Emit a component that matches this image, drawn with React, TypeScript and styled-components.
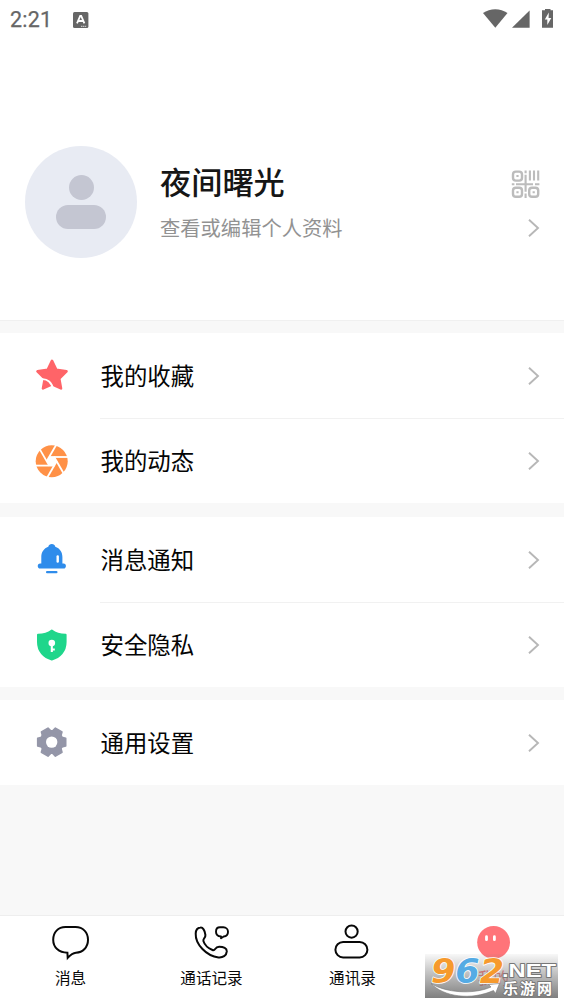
import React from 'react';
import styled, { createGlobalStyle } from 'styled-components';

const GlobalStyle = createGlobalStyle`
  * { box-sizing: border-box; }
  html, body { margin: 0; padding: 0; background: #f8f8f8; }
  body { font-family: Roboto, "Noto Sans CJK SC", sans-serif; color: #0c0c0c; }
  svg { display: block; flex: none; }
`;

const Screen = styled.div`
  width: 564px;
  height: 1004px;
  display: flex;
  flex-direction: column;
  background: #f8f8f8;
  overflow: hidden;
`;

const Header = styled.header`
  height: 321px;
  flex: none;
  background: #fff;
  border-bottom: 1px solid #f0f0f0;
`;

const StatusBar = styled.div`
  height: 40px;
  display: flex;
  align-items: center;
  padding: 0 10px 0 10px;
  color: #666;
`;

const Clock = styled.span`
  font: 400 21.5px/40px Roboto, sans-serif;
  width: 63px;
  height: 40px;
  letter-spacing: 0.2px;
  -webkit-text-stroke: 0.25px #666;
`;

const StatusIcons = styled.div`
  margin-left: auto;
`;

const Profile = styled.div`
  display: flex;
  margin-top: 106px;
  padding: 0 24px 0 25px;
`;

const Avatar = styled.div`
  width: 112px;
  height: 112px;
  border-radius: 50%;
  background: #e8ebf3;
  display: flex;
  flex-direction: column;
  align-items: center;
  padding-top: 29px;
  gap: 5px;
`;

const AvatarHead = styled.div`
  width: 25px;
  height: 25px;
  border-radius: 50%;
  background: #c4c6d2;
`;

const AvatarBody = styled.div`
  width: 50px;
  height: 24px;
  border-radius: 12px;
  background: #c4c6d2;
`;

const ProfileText = styled.div`
  margin-left: 23px;
  padding-top: 15px;
`;

const Name = styled.div`
  font-size: 31.2px;
  line-height: 46px;
  font-weight: 500;
  color: #161616;
`;

const Hint = styled.div`
  font-size: 20.3px;
  line-height: 30px;
  margin-top: 7px;
  color: #929292;
`;

const ProfileActions = styled.div`
  margin-left: auto;
  padding-top: 24px;
  display: flex;
  flex-direction: column;
  align-items: flex-end;
  gap: 19px;
`;

const Group = styled.section<{ $gap: number }>`
  margin-top: ${(p) => p.$gap}px;
  flex: none;
  background: #fff;
`;

const Row = styled.div<{ $height: number }>`
  height: ${(p) => p.$height}px;
  display: flex;
  padding-left: 34px;
`;

const RowIcon = styled.div`
  width: 66px;
  display: flex;
  align-items: center;
  padding-bottom: 1px;
`;

const RowMain = styled.div<{ $line?: boolean }>`
  flex: 1;
  display: flex;
  align-items: center;
  justify-content: space-between;
  padding-right: 24px;
  border-bottom: ${(p) => (p.$line ? '1px solid #f1f1f1' : '0')};
`;

const RowLabel = styled.span`
  font-size: 23.4px;
  line-height: 36px;
  padding: 2px 0 0 0.5px;
  color: #050505;
`;

const TabBar = styled.nav`
  position: relative;
  margin-top: auto;
  height: 89px;
  flex: none;
  display: flex;
  background: #fff;
  border-top: 1px solid #eee;
`;

const Tab = styled.div<{ $active?: boolean }>`
  flex: 1;
  display: flex;
  flex-direction: column;
  align-items: center;
  padding-top: 7px;
  font-size: 15.6px;
  line-height: 24px;
  color: ${(p) => (p.$active ? '#ff7479' : '#080808')};
`;

const TabLabel = styled.span`
  margin-top: 6px;
`;

const Watermark = styled.div`
  position: absolute;
  left: 425px;
  top: 36px;
  width: 133px;
  height: 46px;
`;

const Chevron = () => (
  <svg width="15" height="20" viewBox="0 0 15 20">
    <path d="M4 1.8 13 10 4 18.2" fill="none" stroke="#b7b7b7" strokeWidth="1.9" />
  </svg>
);

const QrIcon = () => (
  <svg width="29" height="29" viewBox="0 0 29 29" fill="none" stroke="#bcbcbc" strokeWidth="2.4">
    <rect x="2" y="1.6" width="9" height="9" rx="2.8" />
    <rect x="2" y="17.8" width="9" height="9" rx="2.8" />
    <rect x="18.2" y="17.8" width="9" height="9" rx="2.8" />
    <path d="M14.6 .6v2.6M14.6 4.8v17M14.6 23.4v4.6M18.9 .6v10M23 .6v10M27.2 .6v10M.8 14.2h2.6M5 14.2h17M24 14.2h4.4" strokeWidth="2.1" />
    <path d="M5.4 6.1h2.2M5.4 22.3h2.2M21.6 22.3h2.2" strokeWidth="2" />
  </svg>
);

const StarIcon = () => (
  <svg width="36" height="36" viewBox="0 0 36 36">
    <path
      d="M18 2.9 22.3 11.7 32.5 13.3 25.2 20.5 27 30.4 18 26.2 9 30.4 10.8 20.5 3.5 13.3 13.7 11.7Z"
      fill="#ff6468" stroke="#ff6468" strokeWidth="2.6" strokeLinejoin="round"
    />
    <path d="M7 21.2C13.4 20.4 18.2 24.4 19 31.8" fill="none" stroke="#fff" strokeWidth="1.9" />
  </svg>
);

const ApertureIcon = () => (
  <svg width="36" height="36" viewBox="0 0 36 36">
    <circle cx="17.7" cy="18.3" r="16" fill="#ff9147" />
    <path d="m17.7 13 4.3 2.5v5L17.7 23l-4.3-2.5v-5Z" fill="#fff" transform="translate(0 .3) rotate(30 17.7 18)" />
    <g stroke="#fff" strokeWidth="1.8">
      {[0, 60, 120, 180, 240, 300].map((a) => (
        <path key={a} d="M14.9 14H34" transform={`rotate(${a} 17.7 18.3)`} />
      ))}
    </g>
  </svg>
);

const BellIcon = () => (
  <svg width="36" height="36" viewBox="0 0 36 36" fill="#2f8ceb">
    <path d="M17.8 2c1.8 0 3.1 1 3.5 2.7 4.6 1.6 7.1 5.4 7.1 10.3v6.5h1.2c3.1 0 3.1 5.1 0 5.1H6.1c-3.1 0-3.1-5.1 0-5.1h1.2V15c0-4.9 2.5-8.7 7-10.3C14.7 3 16 2 17.8 2Z" />
    <rect x="12" y="28.9" width="11.5" height="2.4" rx="1" />
    <path d="M23.7 14.5v5" stroke="#fff" strokeWidth="2.4" strokeLinecap="round" />
  </svg>
);

const ShieldIcon = () => (
  <svg width="36" height="36" viewBox="0 0 36 36">
    <path
      d="M17.8 3.6C21.5 6.5 26.3 7.7 31.6 7.7V15C31.6 24.2 25.8 30.3 17.8 32.5 9.8 30.3 4 24.2 4 15V7.7C9.3 7.7 14.1 6.5 17.8 3.6Z"
      fill="#1fd68b" stroke="#1fd68b" strokeWidth="2" strokeLinejoin="round"
    />
    <circle cx="17.8" cy="16.1" r="3.3" fill="#fff" />
    <path d="M17.8 18v7M17.8 22.5h3" stroke="#fff" strokeWidth="2.1" />
  </svg>
);

const GearIcon = () => (
  <svg width="36" height="36" viewBox="0 0 36 36">
    <g fill="#9496a8">
      <circle cx="17.7" cy="18.1" r="12" />
      {[30, 90, 150, 210, 270, 330].map((a) => (
        <path
          key={a}
          d="M12.6 9 13.9 4.1H21.5L22.8 9Z"
          stroke="#9496a8"
          strokeWidth="1.6"
          strokeLinejoin="round"
          transform={`rotate(${a} 17.7 18.1)`}
        />
      ))}
    </g>
    <circle cx="17.7" cy="18.1" r="5.7" fill="#fff" />
  </svg>
);

const StatusApp = () => (
  <svg width="16" height="16" viewBox="0 0 16 16">
    <rect width="15.4" height="16" rx="1.5" fill="#666" />
    <path d="m4 11.3 3.2-7.5h1L11.4 11.3M5.3 9h4.9" fill="none" stroke="#fff" strokeWidth="1.8" />
    <path d="M8 14.3h5.5" stroke="#ddd" strokeWidth="1" strokeDasharray="1.4 .5" />
  </svg>
);

const SystemIcons = () => (
  <svg width="72" height="22" viewBox="0 0 72 22" fill="#666">
    <path d="M1 4C8 -1.1 18.5 -1.1 25.5 4L13.3 18.7Z" />
    <path d="M47.6 1.4v17.4H30Z" />
    <path d="M63 0h5.5v1.2H71v17.5H60V1.2h3Z" />
    <path d="m66.8 3.6-4 7h2.5v5.5l4-7.2h-2.7Z" fill="#fff" />
  </svg>
);

const ChatIcon = () => (
  <svg width="40" height="38" viewBox="0 0 40 38" fill="none" stroke="#080808" strokeWidth="2" strokeLinejoin="miter">
    <path d="M14.5 4.1H24.5C32 4.1 37 9.3 37 16.8 37 24.4 31.8 29.5 24.9 29.7 21.8 30 18.6 32.8 16.7 34.8L16.4 29.7C7.8 29.7 2.2 24.4 2.2 16.8 2.2 9.3 7 4.1 14.5 4.1Z" />
  </svg>
);

const PhoneIcon = () => (
  <svg width="40" height="38" viewBox="0 0 40 38" fill="none" stroke="#080808" strokeWidth="2" strokeLinejoin="round">
    <path d="M8.4 4.6C10.8 4.2 12.8 7.2 13.4 11.8 13.8 15.2 10.8 15 11.4 18.1 12.4 22 16.8 25.6 20.5 27 23.8 28.2 22.3 23.7 27.2 23.8 31.5 23.8 34.9 25.2 34.8 28.4 34.5 32.7 30.8 34.8 26.5 34.4 14.6 33.2 3.2 21.2 3.7 10.6 3.8 7.3 5.4 5 8.4 4.6Z" />
    <path d="M28 4.3h3.3c2.8 0 4.7 1.9 4.7 4.4 0 2.7-1.8 4.6-4.3 4.8L29 15.3v-1.8c-3.1-.2-5-2.2-5-4.8 0-2.5 1.5-4.4 4-4.4Z" strokeWidth="1.9" />
  </svg>
);

const ContactsIcon = () => (
  <svg width="40" height="38" viewBox="0 0 40 38" fill="none" stroke="#080808" strokeWidth="2">
    <circle cx="18.6" cy="8.6" r="6.1" />
    <rect x="2.4" y="19" width="32" height="15.4" rx="7.7" />
  </svg>
);

const FaceIcon = () => (
  <svg width="40" height="38" viewBox="0 0 40 38">
    <circle cx="19.6" cy="19.3" r="16.4" fill="#ff7479" />
    <path d="M12.5 13.7v3M20.4 13.7v3" stroke="#fff" strokeWidth="2.8" strokeLinecap="round" />
  </svg>
);

const SiteMark = () => (
  <svg width="133" height="46" viewBox="0 0 133 46">
    <defs>
      <linearGradient id="shade" x1="0" y1="0" x2="0" y2="1">
        <stop offset="0" stopColor="#777" stopOpacity="0.05" />
        <stop offset="0.4" stopColor="#777" stopOpacity="0.42" />
        <stop offset="1" stopColor="#777" stopOpacity="0.94" />
      </linearGradient>
    </defs>
    <rect y="2" width="133" height="44" fill="url(#shade)" />
    <text x="6" y="30.5" fontFamily="DejaVu Sans, sans-serif" fontWeight="700" fontStyle="italic" fontSize="33.5" textLength="73" lengthAdjust="spacingAndGlyphs" stroke="#fff" strokeWidth="1.6" paintOrder="stroke" strokeLinejoin="round">
      <tspan fill="#f69a2d">9</tspan>
      <tspan fill="#55abe4">6</tspan>
      <tspan fill="#f69a2d">2</tspan>
    </text>
    <g fill="#fff" stroke="#777" strokeWidth="1.8" paintOrder="stroke" strokeLinejoin="round" fontWeight="700">
      <text x="77" y="24.5" fontFamily="Liberation Sans, sans-serif" fontSize="19" textLength="54" lengthAdjust="spacingAndGlyphs">.NET</text>
      <text x="78" y="41.5" fontFamily="Noto Sans CJK SC, sans-serif" fontSize="15" textLength="49">乐游网</text>
    </g>
    <path d="M6 31.5C20 40.5 48 43 66 35L63.5 32.5 74.5 31.5 70.5 41.5 68.5 38.5C46 48.5 19 45 6 31.5Z" fill="#fff" stroke="#777" strokeWidth=".6" />
  </svg>
);

type Item = { label: string; icon: React.ReactNode; height: number; line?: boolean };

const groups: { gap: number; items: Item[] }[] = [
  {
    gap: 12,
    items: [
      { label: '我的收藏', icon: <StarIcon />, height: 86, line: true },
      { label: '我的动态', icon: <ApertureIcon />, height: 84 },
    ],
  },
  {
    gap: 14,
    items: [
      { label: '消息通知', icon: <BellIcon />, height: 86, line: true },
      { label: '安全隐私', icon: <ShieldIcon />, height: 84 },
    ],
  },
  { gap: 13, items: [{ label: '通用设置', icon: <GearIcon />, height: 85 }] },
];

const tabs = [
  { label: '消息', icon: <ChatIcon /> },
  { label: '通话记录', icon: <PhoneIcon /> },
  { label: '通讯录', icon: <ContactsIcon /> },
  { label: '我的', icon: <FaceIcon />, active: true },
];

export default function App() {
  return (
    <>
      <GlobalStyle />
      <Screen>
        <Header>
          <StatusBar>
            <Clock>2:21</Clock>
            <StatusApp />
            <StatusIcons><SystemIcons /></StatusIcons>
          </StatusBar>
          <Profile>
            <Avatar>
              <AvatarHead />
              <AvatarBody />
            </Avatar>
            <ProfileText>
              <Name>夜间曙光</Name>
              <Hint>查看或编辑个人资料</Hint>
            </ProfileText>
            <ProfileActions>
              <QrIcon />
              <Chevron />
            </ProfileActions>
          </Profile>
        </Header>
        {groups.map((group, i) => (
          <Group key={i} $gap={group.gap}>
            {group.items.map((item) => (
              <Row key={item.label} $height={item.height}>
                <RowIcon>{item.icon}</RowIcon>
                <RowMain $line={item.line}>
                  <RowLabel>{item.label}</RowLabel>
                  <Chevron />
                </RowMain>
              </Row>
            ))}
          </Group>
        ))}
        <TabBar>
          {tabs.map((tab) => (
            <Tab key={tab.label} $active={tab.active}>
              {tab.icon}
              <TabLabel>{tab.label}</TabLabel>
            </Tab>
          ))}
          <Watermark><SiteMark /></Watermark>
        </TabBar>
      </Screen>
    </>
  );
}
